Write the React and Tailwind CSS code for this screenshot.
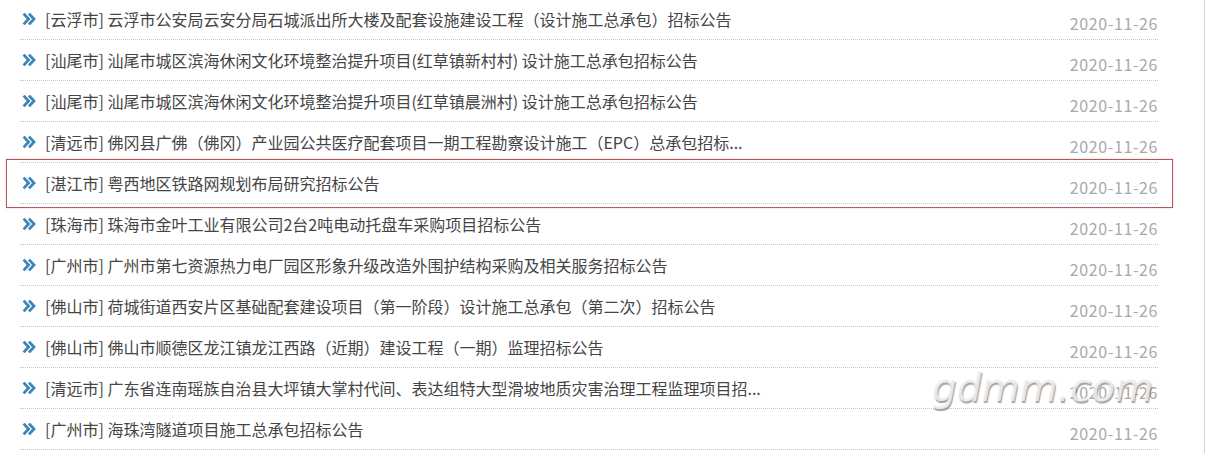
import React from 'react';

const ITEMS = [
  { city: '云浮市', title: '云浮市公安局云安分局石城派出所大楼及配套设施建设工程（设计施工总承包）招标公告' },
  { city: '汕尾市', title: '汕尾市城区滨海休闲文化环境整治提升项目(红草镇新村村) 设计施工总承包招标公告' },
  { city: '汕尾市', title: '汕尾市城区滨海休闲文化环境整治提升项目(红草镇晨洲村) 设计施工总承包招标公告' },
  { city: '清远市', title: '佛冈县广佛（佛冈）产业园公共医疗配套项目一期工程勘察设计施工（EPC）总承包招标...' },
  { city: '湛江市', title: '粤西地区铁路网规划布局研究招标公告' },
  { city: '珠海市', title: '珠海市金叶工业有限公司2台2吨电动托盘车采购项目招标公告' },
  { city: '广州市', title: '广州市第七资源热力电厂园区形象升级改造外围护结构采购及相关服务招标公告' },
  { city: '佛山市', title: '荷城街道西安片区基础配套建设项目（第一阶段）设计施工总承包（第二次）招标公告' },
  { city: '佛山市', title: '佛山市顺德区龙江镇龙江西路（近期）建设工程（一期）监理招标公告' },
  { city: '清远市', title: '广东省连南瑶族自治县大坪镇大掌村代间、表达组特大型滑坡地质灾害治理工程监理项目招...' },
  { city: '广州市', title: '海珠湾隧道项目施工总承包招标公告' },
];

function Chevron() {
  return (
    <svg className="h-[14px] w-[14px] shrink-0" viewBox="0 0 14 14" fill="none">
      <path d="M1.6 1.6 L6.6 7 L1.6 12.4" stroke="#3d84b8" strokeWidth="2.8" />
      <path d="M7 1.6 L12 7 L7 12.4" stroke="#3d84b8" strokeWidth="2.8" />
    </svg>
  );
}

export default function App() {
  return (
    <div
      className="relative h-[453px] w-[1205px] overflow-hidden border-r border-[#d2d2d2] bg-white"
      style={{ fontFamily: '"Noto Sans CJK SC", "Noto Sans", sans-serif' }}
    >
      <ul className="-mt-px ml-[20px] w-[1138px]">
        {ITEMS.map((item, i) => (
          <li
            key={i}
            className="flex h-[41px] items-start justify-between border-b border-dotted border-[#c4c4c4]"
          >
            <div className="flex items-center pt-[7px] text-[16px] leading-[26px] text-[#454545]">
              <span className="ml-[2px] mr-[9px] flex items-center">
                <Chevron />
              </span>
              <span className="whitespace-nowrap">
                [{item.city}] {item.title}
              </span>
            </div>
            <span className="whitespace-nowrap pt-[11px] text-[16px] leading-[26px] tracking-[0.6px] text-[#a9a9a9]">
              2020-11-26
            </span>
          </li>
        ))}
      </ul>

      {/* highlighted row */}
      <div className="pointer-events-none absolute left-[6px] top-[159px] h-[49px] w-[1167px] border border-[#b5575a] shadow-[0_0_2px_rgba(200,90,90,0.35)]" />

      {/* watermark */}
      <div
        className="pointer-events-none absolute left-[932px] top-[363px] text-[39px] italic leading-[50px] text-[#efefef]/90"
        style={{
          fontFamily: '"DejaVu Sans", sans-serif',
          textShadow: '1px 2px 1px rgba(90,90,90,0.55)',
        }}
      >
        gdmm.com
      </div>
    </div>
  );
}
